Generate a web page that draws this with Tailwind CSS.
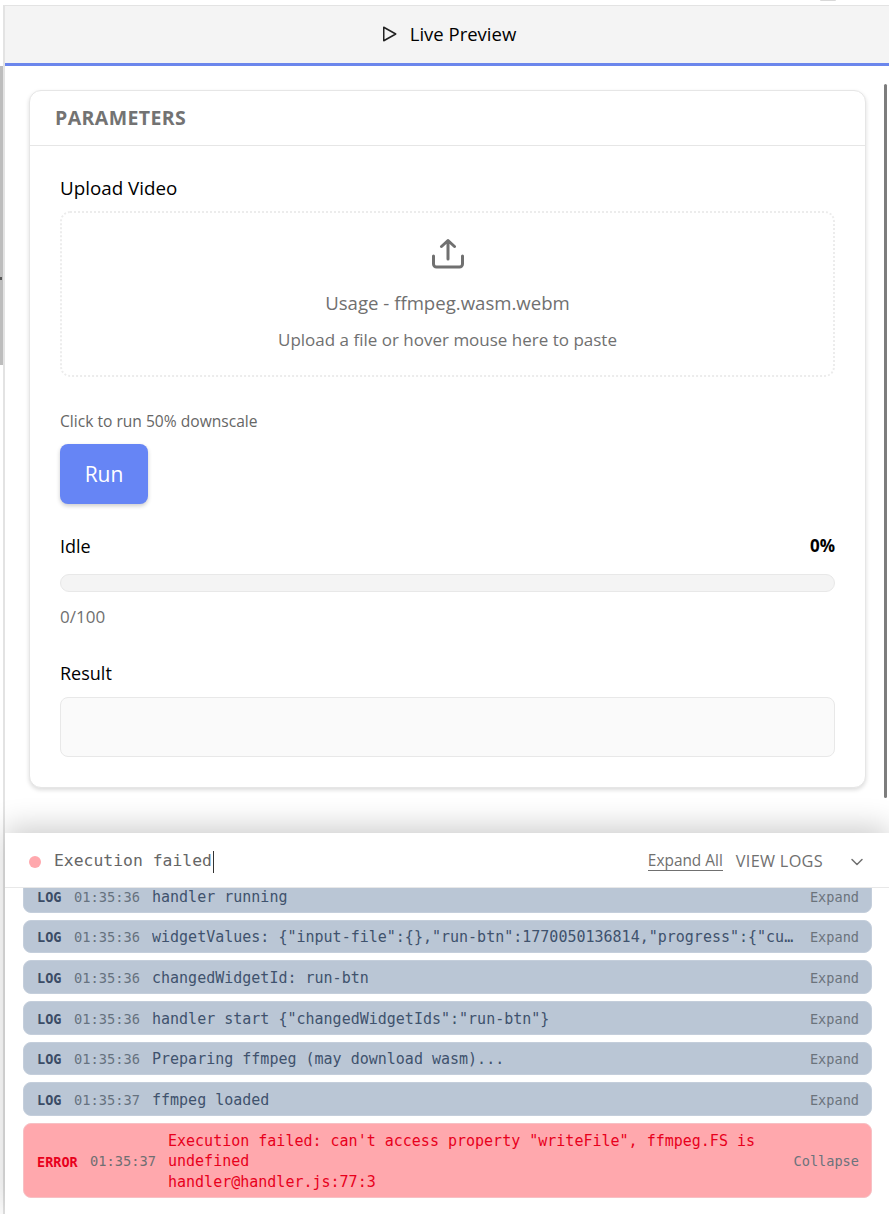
<!DOCTYPE html>
<html lang="en">
<head>
    <meta charset="UTF-8">
    <title>Live Preview</title>
    <script src="https://cdn.jsdelivr.net/npm/@tailwindcss/browser@4"></script>
</head>
<body class="bg-white">
    <div class="relative h-[1214px] w-[889px] overflow-hidden pt-[5px] font-['Open_Sans','Noto_Sans',sans-serif]">
        <!-- left edge of the neighbouring pane, and the bit of it showing at the top -->
        <div class="absolute left-0 top-[66px] h-[299px] w-[3px] bg-[#bdbdbd]"></div>
        <div class="absolute left-0 top-[277px] h-[3px] w-[2px] bg-[#555555]"></div>
        <div class="absolute left-[820px] top-0 h-[1px] w-[16px] rounded-b-full bg-[#d8d8d8]"></div>

        <div class="ml-[3px] flex h-[1209px] flex-col border-l-2 border-t border-[#e3e3e3]">
            <div class="flex h-[57px] items-center justify-center gap-[12px] bg-[#f4f4f4] pb-[2px] pl-[2px] text-[18.500px] text-black">
                <svg class="h-[18px] w-[18px]" viewBox="0 0 24 24" fill="none" stroke="#222222" stroke-width="2" stroke-linejoin="round"><path d="M5 3l16 9-16 9z"/></svg>
                <span>Live Preview</span>
            </div>
            <div class="h-[3px] bg-[#6b86ec]"></div>

            <div class="relative h-[767px] bg-white pl-[24px] pt-[24px]">
                <div class="absolute right-[2px] top-[18px] h-[714px] w-[3px] rounded-full bg-[#7d7d7d]"></div>
                <div class="h-[698px] w-[837px] rounded-[12px] border border-[#e6e6e6] bg-white shadow-[0_2px_4px_rgba(0,0,0,0.14)]">
                    <div class="flex h-[55px] items-center border-b border-[#e6e6e6] pl-[25px] text-[19.500px] font-bold tracking-[0.4px] text-[#737373]">PARAMETERS</div>
                    <div class="px-[30px] pt-[30px]">
                        <div class="text-[18.800px] leading-[24px] text-black">Upload Video</div>
                        <div class="mt-[11px] flex h-[166px] flex-col items-center rounded-[10px] border-2 border-dotted border-[#ececec] pt-[24px]">
                            <svg class="h-[34px] w-[34px]" viewBox="0 0 34 34" fill="none" stroke="#707070" stroke-width="3" stroke-linecap="round" stroke-linejoin="round"><path d="M17 22V3.500M10.500 9.500 17 3.500l6.500 6M2.500 19v8a3 3 0 0 0 3 3h23a3 3 0 0 0 3-3v-8"/></svg>
                            <div class="mt-[19px] text-[18.600px] leading-[26px] text-[#707070]">Usage - ffmpeg.wasm.webm</div>
                            <div class="mt-[11px] text-[17px] leading-[26px] text-[#707070]">Upload a file or hover mouse here to paste</div>
                        </div>
                        <div class="mt-[34px] text-[15.600px] leading-[20px] text-[#666666]">Click to run 50% downscale</div>
                        <button class="mt-[13px] block h-[60px] w-[88px] rounded-[8px] bg-[#6685f5] pt-[2px] text-[21px] text-white shadow-[0_2px_4px_rgba(0,0,0,0.2)]">Run</button>
                        <div class="mt-[30px] flex h-[24px] items-center justify-between text-[18px] text-black">
                            <span>Idle</span>
                            <span class="text-[17px] font-bold">0%</span>
                        </div>
                        <div class="mt-[16px] h-[18px] rounded-full border border-[#e8e8e8] bg-[#f4f4f4]"></div>
                        <div class="mt-[13px] text-[17px] leading-[24px] text-[#707070]">0/100</div>
                        <div class="mt-[32px] text-[18px] leading-[24px] text-black">Result</div>
                        <div class="mt-[12px] h-[60px] rounded-[8px] border border-[#e8e8e8] bg-[#fafafa]"></div>
                    </div>
                </div>
            </div>

            <!-- execution panel, its shadow falls on the preview above -->
            <div class="relative flex min-h-0 flex-1 flex-col bg-white shadow-[0_-6px_28px_rgba(0,0,0,0.2)]">
                <div class="relative z-10 flex h-[55px] items-center border-b border-[#e8e8e8] bg-white pl-[24px] pr-[25px] pt-[3px]">
                    <span class="h-[12px] w-[12px] rounded-full bg-[#ffa8ad]"></span>
                    <span class="ml-[13px] font-['DejaVu_Sans_Mono','Liberation_Mono',monospace] text-[16.400px] text-[#666666]">Execution failed</span>
                    <span class="ml-px h-[22px] w-px bg-[#333333]"></span>
                    <span class="ml-auto border-b border-[#707070] text-[15.400px] leading-[18px] text-[#707070]">Expand All</span>
                    <span class="ml-[13px] text-[16.300px] tracking-[0.3px] text-[#707070]">VIEW LOGS</span>
                    <svg class="ml-[27px] h-[14px] w-[14px]" viewBox="0 0 14 14" fill="none" stroke="#707070" stroke-width="1.500" stroke-linecap="round" stroke-linejoin="round"><path d="M2 4.500 7 9.500 12 4.500"/></svg>
                </div>
                <div class="min-h-0 flex-1 overflow-hidden pl-[18px] pr-[17px]">
                    <div class="mt-[-9px] flex flex-col gap-[7px] font-['DejaVu_Sans_Mono','Liberation_Mono',monospace] text-[15px] text-[#3f526d]">
                        <div class="flex h-[33.670px] items-center rounded-[8px] border border-[#c4cedb] bg-[#bac6d5] pl-[13px] pr-[12px] pt-[2px]">
                            <span class="w-[37px] text-[13.500px] font-bold text-[#3b4c66]">LOG</span><span class="w-[78px] text-[13.700px] text-[#66727f]">01:35:36</span><span class="min-w-0 flex-1 truncate">handler running</span><span class="ml-[13px] text-[13.600px] text-[#6b737c]">Expand</span>
                        </div>
                        <div class="flex h-[33.670px] items-center rounded-[8px] border border-[#c4cedb] bg-[#bac6d5] pl-[13px] pr-[12px] pt-[2px]">
                            <span class="w-[37px] text-[13.500px] font-bold text-[#3b4c66]">LOG</span><span class="w-[78px] text-[13.700px] text-[#66727f]">01:35:36</span><span class="min-w-0 flex-1 truncate">widgetValues: {"input-file":{},"run-btn":1770050136814,"progress":{"current":0}}</span><span class="ml-[13px] text-[13.600px] text-[#6b737c]">Expand</span>
                        </div>
                        <div class="flex h-[33.670px] items-center rounded-[8px] border border-[#c4cedb] bg-[#bac6d5] pl-[13px] pr-[12px] pt-[2px]">
                            <span class="w-[37px] text-[13.500px] font-bold text-[#3b4c66]">LOG</span><span class="w-[78px] text-[13.700px] text-[#66727f]">01:35:36</span><span class="min-w-0 flex-1 truncate">changedWidgetId: run-btn</span><span class="ml-[13px] text-[13.600px] text-[#6b737c]">Expand</span>
                        </div>
                        <div class="flex h-[33.670px] items-center rounded-[8px] border border-[#c4cedb] bg-[#bac6d5] pl-[13px] pr-[12px] pt-[2px]">
                            <span class="w-[37px] text-[13.500px] font-bold text-[#3b4c66]">LOG</span><span class="w-[78px] text-[13.700px] text-[#66727f]">01:35:36</span><span class="min-w-0 flex-1 truncate">handler start {"changedWidgetIds":"run-btn"}</span><span class="ml-[13px] text-[13.600px] text-[#6b737c]">Expand</span>
                        </div>
                        <div class="flex h-[33.670px] items-center rounded-[8px] border border-[#c4cedb] bg-[#bac6d5] pl-[13px] pr-[12px] pt-[2px]">
                            <span class="w-[37px] text-[13.500px] font-bold text-[#3b4c66]">LOG</span><span class="w-[78px] text-[13.700px] text-[#66727f]">01:35:36</span><span class="min-w-0 flex-1 truncate">Preparing ffmpeg (may download wasm)...</span><span class="ml-[13px] text-[13.600px] text-[#6b737c]">Expand</span>
                        </div>
                        <div class="flex h-[33.670px] items-center rounded-[8px] border border-[#c4cedb] bg-[#bac6d5] pl-[13px] pr-[12px] pt-[2px]">
                            <span class="w-[37px] text-[13.500px] font-bold text-[#3b4c66]">LOG</span><span class="w-[78px] text-[13.700px] text-[#66727f]">01:35:37</span><span class="min-w-0 flex-1 truncate">ffmpeg loaded</span><span class="ml-[13px] text-[13.600px] text-[#6b737c]">Expand</span>
                        </div>
                        <div class="flex h-[75.500px] items-center rounded-[8px] border border-[#f7c0c4] bg-[#ffa8ad] pl-[13px] pr-[12px] pt-[2px]">
                            <span class="w-[53px] text-[13.500px] font-bold text-[#e8001c]">ERROR</span><span class="w-[78px] text-[13.700px] text-[#6f6f72]">01:35:37</span><span class="min-w-0 flex-1 text-[15px] leading-[20.500px] text-[#e8001c]">Execution failed: can't access property "writeFile", ffmpeg.FS is undefined<br>handler@handler.js:77:3</span><span class="ml-[13px] text-[13.600px] text-[#6b737c]">Collapse</span>
                        </div>
                    </div>
                </div>
            </div>
        </div>
    </div>
</body>
</html>
